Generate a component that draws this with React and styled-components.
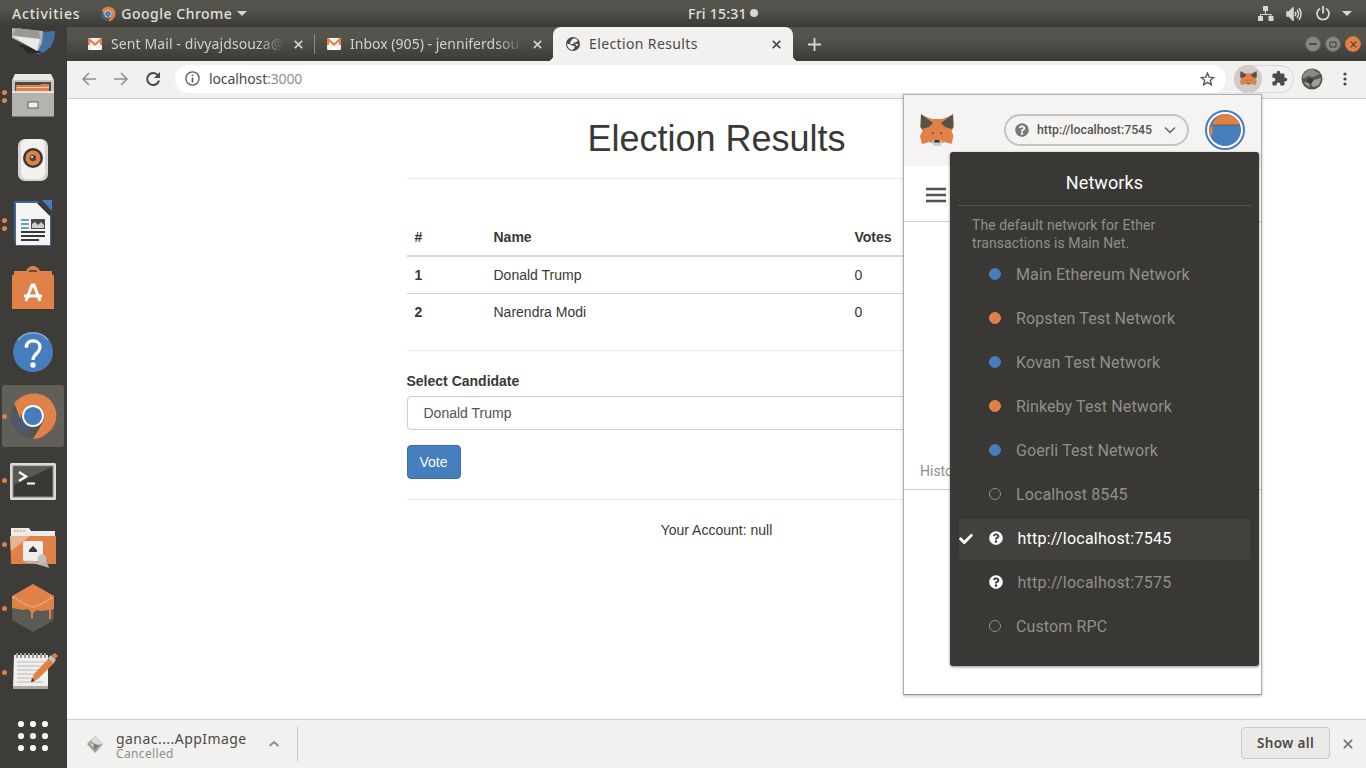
import React from "react";
import styled, { createGlobalStyle } from "styled-components";
import { FaCheck, FaQuestionCircle } from "react-icons/fa";
import { MdExtension } from "react-icons/md";

const ink = "#393834";
const olive = "#53524b";
const orange = "#e08248";
const blue = "#457dbd";
const paper = "#f2f1ef";
const silver = "#cfcdcb";
const grey = "#918f8c";

const GlobalStyle = createGlobalStyle`
  * { box-sizing: border-box; }
  body { margin: 0; overflow: hidden; background: #fff; }
  svg { display: block; flex: none; }
`;

const Desktop = styled.div`
  width: 1366px;
  height: 768px;
  display: flex;
  flex-direction: column;
  font-family: "Noto Sans", "Open Sans", sans-serif;
  color: ${ink};
`;

const TopBar = styled.header`
  height: 27px;
  flex: none;
  display: grid;
  grid-template-columns: 676px auto 1fr;
  align-items: center;
  padding: 0 14px 0 12px;
  background: linear-gradient(#54534c 0 30%, #3b3a36 100%);
  color: #e2e0dd;
`;

const TopGroup = styled.div`
  display: flex;
  align-items: center;
  gap: ${(p) => p.$gap || 0}px;
  justify-content: ${(p) => (p.$end ? "flex-end" : "flex-start")};
`;

const AppBadge = styled.span`
  margin: 0 5px 0 20px;
`;

const ShellLabel = styled.span`
  font-size: 14px;
  line-height: 20px;
  font-weight: 500;
  white-space: nowrap;
  letter-spacing: ${(p) => p.$spacing || 0}px;
`;

const Caret = styled.span`
  border: 5px solid transparent;
  border-top-color: #d8d6d3;
  border-bottom: 0;
  margin-left: ${(p) => p.$ml || 0}px;
`;

const NoticeDot = styled.span`
  width: 8px;
  height: 8px;
  border-radius: 50%;
  background: #d8d6d3;
  margin: -1px 0 0 3px;
`;

const Workspace = styled.div`
  flex: 1;
  min-height: 0;
  display: flex;
`;

const Dock = styled.nav`
  width: 67px;
  flex: none;
  display: flex;
  flex-direction: column;
  justify-content: flex-end;
  overflow: hidden;
  background: #3d3c38;
`;

const DockSlot = styled.div`
  height: 64px;
  flex: none;
  display: flex;
  align-items: center;
  padding: 1px 3px 1px 2px;
`;

const DockTile = styled.div`
  width: 62px;
  height: 62px;
  display: flex;
  align-items: center;
  border-radius: 3px;
  background: ${(p) => (p.$active ? "#605f58" : "transparent")};
`;

const RunDots = styled.div`
  width: 6px;
  flex: none;
  display: flex;
  flex-direction: column;
  gap: 3px;
`;

const RunDot = styled.i`
  width: 5px;
  height: 5px;
  border-radius: 50%;
  background: ${orange};
`;

const Browser = styled.section`
  position: relative;
  flex: 1;
  min-width: 0;
  display: flex;
  flex-direction: column;
  background: #fff;
`;

const TabStrip = styled.div`
  height: 34px;
  flex: none;
  display: flex;
  align-items: center;
  background: linear-gradient(#54534c 0 30%, #3b3a36 100%);
  color: #d3d1ce;
`;

const Tab = styled.div`
  position: relative;
  width: ${(p) => p.$width}px;
  height: 34px;
  flex: none;
  display: flex;
  align-items: center;
  padding: 0 ${(p) => p.$right}px 0 ${(p) => p.$left}px;
  gap: 9px;
  border-radius: 8px 8px 0 0;
  background: ${(p) => (p.$active ? paper : "transparent")};
  color: ${(p) => (p.$active ? "#4b4a46" : "inherit")};

  &::before, &::after {
    content: "";
    display: ${(p) => (p.$active ? "block" : "none")};
    position: absolute;
    bottom: 0;
    width: 6px;
    height: 6px;
  }
  &::before { left: -6px; background: radial-gradient(circle at 0 0, transparent 6px, ${paper} 6.5px); }
  &::after { right: -6px; background: radial-gradient(circle at 100% 0, transparent 6px, ${paper} 6.5px); }
`;

const TabTitle = styled.span`
  flex: 1;
  min-width: 0;
  white-space: nowrap;
  font-size: 14px;
  line-height: 20px;
  letter-spacing: ${(p) => p.$spacing || 0}px;
  mask-image: ${(p) => (p.$fade ? "linear-gradient(90deg, #000 84%, transparent 100%)" : "none")};
`;

const Divider = styled.span`
  width: 1px;
  height: ${(p) => p.$height}px;
  flex: none;
  background: ${(p) => p.$color};
`;

const NewTab = styled.div`
  flex: 1;
  padding-left: 15px;
`;

const WindowButtons = styled.div`
  display: flex;
  gap: 4px;
  padding-right: 5px;
`;

const WindowButton = styled.span`
  width: 16px;
  height: 16px;
  border-radius: 50%;
  display: flex;
  align-items: center;
  justify-content: center;
  border: 1px solid ${(p) => (p.$close ? "#cf7440" : "#64625d")};
  background: ${(p) => (p.$close ? orange : "#898782")};
`;

const Toolbar = styled.div`
  height: 38px;
  flex: none;
  display: flex;
  align-items: center;
  padding: 0 17px 2px 14px;
  border-bottom: 1px solid ${silver};
  background: ${paper};
`;

const NavButtons = styled.div`
  display: flex;
  gap: 16px;
  margin-right: 14px;
`;

const Omnibox = styled.div`
  width: 1051px;
  height: 28px;
  border-radius: 14px;
  display: flex;
  align-items: center;
  padding: 0 11px 0 10px;
  background: #fff;
`;

const Address = styled.span`
  flex: 1;
  margin-left: 9px;
  font-size: 14px;
  line-height: 20px;
  letter-spacing: -0.12px;
  color: #4a4945;
  span { color: ${grey}; }
`;

const Extensions = styled.div`
  width: 60px;
  height: 28px;
  margin-left: 8px;
  display: flex;
  align-items: center;
  gap: 9px;
  border: 1px solid #d9d7d5;
  border-left: 0;
  border-radius: 14px;
`;

const ActiveExtension = styled.span`
  width: 28px;
  height: 28px;
  border-radius: 50%;
  display: flex;
  align-items: center;
  justify-content: center;
  background: ${silver};
`;

const Profile = styled.span`
  margin: 0 20px 0 7px;
`;

const Page = styled.main`
  flex: 1;
  min-height: 0;
  padding: 20px 0 0 339.5px;
  font: 14px/20px "Liberation Sans", Arial, sans-serif;
`;

const Container = styled.div`
  width: 620px;
`;

const Title = styled.h1`
  height: 39px;
  margin: 0;
  font-size: 36px;
  font-weight: 400;
  line-height: 39.6px;
  text-align: center;
`;

const Rule = styled.hr`
  margin: 20px 0;
  border: 0;
  border-top: 1px solid #ebe9e7;
`;

const Table = styled.table`
  width: 100%;
  margin-top: 40px;
  border-collapse: collapse;
  table-layout: fixed;
`;

const HeadCell = styled.th`
  width: ${(p) => p.$width};
  padding: 8px;
  text-align: left;
  border-bottom: 2px solid #dbd9d7;
`;

const Cell = styled.td`
  padding: 8px;
  border-top: 1px solid #d4d2d0;
  font-weight: ${(p) => (p.$bold ? 700 : 400)};
`;

const FieldLabel = styled.label`
  display: block;
  margin-bottom: 5px;
  font-weight: 700;
`;

const Select = styled.div`
  height: 34px;
  padding: 6px 16px;
  border: 1px solid ${silver};
  border-radius: 4px;
  color: #53514e;
`;

const VoteButton = styled.button`
  display: block;
  height: 34px;
  margin-top: 15px;
  padding: 6px 12px;
  border: 1px solid #3f6ea3;
  border-radius: 4px;
  background: ${blue};
  color: #fff;
  font: 14px/20px "Liberation Sans", Arial, sans-serif;
`;

const Account = styled.p`
  margin: 0;
  text-align: center;
`;

const Downloads = styled.footer`
  height: 49px;
  flex: none;
  display: flex;
  align-items: center;
  padding: 0 13px 0 20px;
  border-top: 1px solid ${silver};
  background: ${paper};
`;

const DownloadItem = styled.div`
  width: 211px;
  height: 36px;
  display: flex;
  align-items: center;
  border-right: 1px solid ${silver};
`;

const DownloadText = styled.div`
  width: 131px;
  margin: 0 21px 0 13px;
  padding-top: 2px;
  color: #4b4a46;
  font-size: 14px;
  line-height: 16px;
  letter-spacing: 0.45px;
  small {
    display: block;
    font-size: 12px;
    line-height: 13px;
    letter-spacing: 0.35px;
    color: ${grey};
  }
`;

const ShowAll = styled.button`
  width: 89px;
  height: 32px;
  margin: 0 13px 2px auto;
  padding: 0;
  border: 1px solid #cbc9c7;
  border-radius: 4px;
  background: #eceae8;
  color: #4b4a46;
  font: 600 13.5px "Noto Sans", sans-serif;
  letter-spacing: 0.35px;
`;

const Wallet = styled.aside`
  position: absolute;
  left: 836px;
  top: 67px;
  width: 359px;
  height: 601px;
  display: flex;
  flex-direction: column;
  border: 1px solid #b1afad;
  border-bottom-color: #918f8c;
  background: #fff;
  box-shadow: 0 1px 3px rgba(0, 0, 0, 0.25);
  font-family: Roboto, sans-serif;
`;

const WalletHeader = styled.div`
  height: 71px;
  flex: none;
  display: flex;
  align-items: center;
  padding: 0 16px 2px;
  background: #f5f4f2;
`;

const NetworkPill = styled.div`
  width: 185px;
  height: 32px;
  margin: 0 16px 0 auto;
  display: flex;
  align-items: center;
  padding: 0 11px 0 9px;
  border: 2px solid #c6c4c2;
  border-radius: 16px;
  color: #53524e;
  font-size: 12.3px;
  font-weight: 500;
  span { flex: 1; margin-left: 8px; }
`;

const WalletBar = styled.div`
  height: 56px;
  flex: none;
  display: flex;
  align-items: center;
  padding: 2px 0 0 22px;
  border-bottom: 1px solid ${silver};
`;

const WalletBody = styled.div`
  height: 268px;
  display: flex;
  align-items: flex-end;
  padding: 0 16px 9px;
  border-bottom: 1px solid ${silver};
  color: ${grey};
  font-size: 14px;
  line-height: 18px;
`;

const NetworkMenu = styled.div`
  position: absolute;
  left: 883px;
  top: 125px;
  width: 309px;
  height: 514px;
  padding: 0 8px;
  border-radius: 3px;
  background: ${ink};
  box-shadow: 0 1px 3px rgba(0, 0, 0, 0.45);
  color: ${grey};
  font-family: Roboto, sans-serif;
`;

const MenuTitle = styled.div`
  height: 54px;
  padding-top: 7px;
  border-bottom: 1px solid ${olive};
  color: #fff;
  font-size: 18px;
  line-height: 47px;
  letter-spacing: 0.1px;
  text-align: center;
`;

const MenuNote = styled.p`
  width: 210px;
  margin: 10px 0 3px 14px;
  font-size: 14px;
  line-height: 18px;
  letter-spacing: 0.08px;
`;

const NetworkRow = styled.div`
  height: 41px;
  margin: 0 1px 3px;
  padding-bottom: 2px;
  display: flex;
  align-items: center;
  border-radius: 3px;
  font-size: 16px;
  letter-spacing: ${(p) => (p.$plain ? 0.11 : 0.24)}px;
  color: ${(p) => (p.$selected ? "#fff" : grey)};
  background: ${(p) => (p.$selected ? "#42413d" : "transparent")};
`;

const CheckSlot = styled.span`
  width: 30px;
  flex: none;
  color: #fff;
`;

const Marker = styled.span`
  width: 12px;
  height: 12px;
  margin: -1px 15px 0 0;
  flex: none;
  border-radius: 50%;
  border: 1px solid ${(p) => p.$color || grey};
  background: ${(p) => p.$color || "transparent"};
`;

const QuestionSlot = styled.span`
  width: 14px;
  margin: -1px 14.5px 0 0;
  color: #fff;
`;

const Close = ({ size = 9, color = "#d3d1ce", w = 1.7 }) => (
  <svg width={size} height={size} viewBox="0 0 9 9" stroke={color} strokeWidth={w}>
    <path d="M.8.8l7.4 7.4M8.2.8L.8 8.2" />
  </svg>
);

const ChromeMark = ({ size = 48, shade = "#49627c" }) => (
  <svg width={size} height={size} viewBox="0 0 48 48">
    <circle cx="24" cy="24" r="21" fill="#53534e" />
    <path d="M4 18a20 20 0 0 0 14 25l5-9-10-10z" fill={shade} />
    <path d="M6 12C14 1 31-1 41 9c10 12 5 27-5 33-4 3-8 4-12 4l10-17c2-6 0-9-2-12H20c-5 2-8 6-8 10z" fill={orange} />
    <circle cx="24" cy="24" r="10.5" fill="#fff" />
    <circle cx="24" cy="24" r="8.7" fill={blue} />
  </svg>
);

const MailMark = () => (
  <svg width="14" height="12" viewBox="0 0 14 12">
    <rect width="14" height="12" rx="1" fill="#f4f2f0" />
    <path d="M1 7V1.200L7 6.600l6-5.400V7" fill="none" stroke={orange} strokeWidth="2" />
    <path d="M3 12l4-4 4 4z" fill="#fff" />
  </svg>
);

const FoxMark = ({ size, height = size }) => (
  <svg width={size} height={height} viewBox="0 0 34 32" preserveAspectRatio="none">
    <path d="M1 1l11 4h10l11-4 .5 12-2 4 2 5-2 8-7-2-4 1.500h-7L9 28l-7 2-2-8 2.500-5L.5 13z" fill={orange} />
    <path d="M1 0l12 9-4 4-7 2-1.500-2zM33 0L21 9l4 4 7 2 1.500-2z" fill="#53524b" />
    <path d="M13 26h8l1 3-2 3h-6l-2-3z" fill="#cfcdcb" />
    <path d="M14.500 26h5l.5 2.500h-6z" fill={ink} />
    <path d="M12 18.500h1.500V20H12zM20.500 18.500H22V20h-1.500z" fill={ink} />
  </svg>
);

const ThunderMark = () => (
  <svg width="50" height="48" viewBox="0 0 50 48">
    <path d="M32 24l15-1c0 8-2 15-8 19-5 4-8 5-10 4z" fill="#4470a3" />
    <path d="M10 36l20 6 4 3H20z" fill="#2a2925" />
    <path d="M4 20l31 3-1 12-4 8L4 30z" fill="#b5b3b0" />
    <path d="M9 20l22 3 1 8L4 27z" fill="#9b9996" />
    <path d="M4 28l28 3-3 12z" fill="#eceae8" />
  </svg>
);

const FilesMark = () => (
  <svg width="50" height="48" viewBox="0 0 50 48">
    <path d="M7 2h36l3 6v36H4V8z" fill="#c8c6c3" />
    <path d="M7 2h36l2 6H5z" fill="#eae8e5" />
    <path d="M7 10h36v11H7z" fill="#4a4945" />
    <path d="M8 13h24l2-1h7v8H8z" fill={orange} />
    <path d="M9 15.500h32" stroke="#f4d5bf" />
    <path d="M4 20h42v24.500H4z" fill="#b5b3b0" />
    <path d="M4 20h42" stroke="#e5e3e0" strokeWidth="2" />
    <rect x="20" y="30" width="10" height="6" fill="#f1efed" stroke="#65635e" />
  </svg>
);

const MusicMark = () => (
  <svg width="50" height="48" viewBox="0 0 50 48">
    <rect x="10" y="3" width="30" height="42" rx="7" fill="#d6d4d1" />
    <rect x="13" y="3" width="24" height="40" rx="6" fill="#f3f1ef" />
    <circle cx="25" cy="22" r="10" fill={ink} />
    <circle cx="25" cy="22" r="7.500" fill={orange} />
    <circle cx="25" cy="22" r="3.200" fill="#4a4945" />
    <circle cx="24" cy="21" r="1" fill="#fff" />
  </svg>
);

const WriterMark = () => (
  <svg width="50" height="48" viewBox="0 0 50 48">
    <path d="M6 1h24l13 14v31H8L6 40z" fill="#42689a" />
    <path d="M8 3h21l13 13v29H8z" fill="#f6f5f3" />
    <path d="M34 0h10v11z" fill={blue} />
    <path d="M29 3l13 13V12L33 3z" fill={ink} />
    <path d="M13 20h8M13 24h8M13 28h8" stroke={blue} strokeWidth="1.600" />
    <rect x="23" y="19" width="14" height="10" fill="#4b4a46" />
    <path d="M24 28v-4l3-2 3 3 3-3 3 3v3z" fill="#cfcdcb" />
    <path d="M13 32h24M13 36h24M13 40h18" stroke={ink} strokeWidth="1.800" />
  </svg>
);

const SoftwareMark = () => (
  <svg width="50" height="48" viewBox="0 0 50 48">
    <path d="M18 8l1-3 4-3h4l4 3 1 3z" fill={orange} />
    <path d="M6 7h38v3l2 2v33H4V12l2-2z" fill={orange} />
    <path d="M21 7h8" stroke={ink} strokeWidth="1.500" />
    <path d="M18 37l6-16h2l6 16" fill="none" stroke="#fff" strokeWidth="3" />
    <path d="M16 32h18" stroke="#fff" strokeWidth="3" />
  </svg>
);

const HelpMark = () => (
  <svg width="50" height="48" viewBox="0 0 50 48">
    <circle cx="25" cy="24" r="20" fill={blue} />
    <path d="M10 12a19 19 0 0 1 30 0" stroke="#86a9d2" strokeWidth="1.500" fill="none" />
    <path d="M18.500 18c0-7 13.500-7 13.500 1 0 6-7 7-7 13" fill="none" stroke="#fff" strokeWidth="3.200" />
    <circle cx="18.500" cy="18" r="2" fill="#fff" />
    <circle cx="25" cy="37" r="2.700" fill="#fff" />
  </svg>
);

const TerminalMark = () => (
  <svg width="50" height="48" viewBox="0 0 50 48">
    <rect x="2" y="7" width="46" height="37" rx="1.500" fill="#dddbd8" />
    <rect x="5" y="10" width="40" height="31" fill="#393834" stroke="#8b8985" />
    <path d="M6 11h38L6 29z" fill="#595851" />
    <path d="M11 16l7 4.500-7 4.500" fill="none" stroke="#fff" strokeWidth="2.300" />
    <path d="M19 27.500h8" stroke="#fff" strokeWidth="2" />
  </svg>
);

const FolderMark = () => (
  <svg width="50" height="48" viewBox="0 0 50 48">
    <path d="M3 8h18l2 3h24v7H3z" fill="#eeecea" />
    <path d="M6 11h12" stroke={orange} strokeDasharray="2 1" />
    <path d="M2 16h46v28H3z" fill={orange} />
    <path d="M2 16h20L3 31z" fill="#e9b591" />
    <rect x="15" y="21" width="20" height="20" rx="1.500" fill="#f1efed" />
    <path d="M21 30l4-4 4 4v2h-8z" fill={ink} />
    <path d="M18 42c8-1 13 2 21 4l-3-6" fill="none" stroke="#b7b5b2" strokeWidth="2.500" />
    <circle cx="34" cy="39" r="4.500" fill="#c3c1be" />
  </svg>
);

const GanacheMark = () => (
  <svg width="50" height="50" viewBox="0 0 50 50">
    <path d="M4 13l21 11 21-11v24L25 49 4 37z" fill="#5b5a53" />
    <path d="M25 1l21 12v13l-3 1v9h-2v-9l-8 1-4-1-4 3v5h-2v-6l-3-3-5 1-5-1-6-1V13z" fill={orange} />
    <path d="M5 14c7 4 12 8 20 10 8-2 13-6 20-10" fill="none" stroke="#eeb48b" strokeWidth="1.500" strokeDasharray="2 1" />
  </svg>
);

const NotesMark = () => (
  <svg width="50" height="48" viewBox="0 0 50 48">
    <path d="M6 7h34v34H5z" fill="#f1efed" />
    <path d="M5 38h35v3H5z" fill="#aaa8a5" />
    <path d="M9 14h28M9 18h28M9 22h24M9 26h22M9 30h20M9 34h26" stroke="#bcbab7" />
    <path d="M9 5v5M13 5v5M17 5v5M21 5v5M25 5v5M29 5v5M33 5v5M37 5v5" stroke="#9a9894" strokeWidth="2" />
    <path d="M23 34l3-8 16-17 5 5-17 17z" fill={orange} />
    <path d="M40 10l3-3 5 5-3 3z" fill="#c5c3c0" />
    <path d="M44 7l3-2 3 3-3 3z" fill={orange} />
    <path d="M23 34l1-4 3 3z" fill={ink} />
  </svg>
);

const AppsMark = () => (
  <svg width="50" height="48" viewBox="0 0 50 48" fill="#f6f5f3">
    {[12, 24, 36].flatMap((y) =>
      [13, 25, 37].map((x) => <circle key={`${x}-${y}`} cx={x} cy={y} r="3.100" />)
    )}
  </svg>
);

const Globe = () => (
  <svg width="14" height="14" viewBox="0 0 14 14">
    <circle cx="7" cy="7" r="7" fill="#4b4a46" />
    <path d="M6.500 1.800l3.500-.3 1.800 2L10 5.200 8 5.500 7 7H4.800L4 5.500z" fill={paper} />
    <path d="M1 6.800l3.300.4 2 1.500 2.500.3-.5 2.500-2.300 1.600C3.500 12.700 1.200 10 1 6.800z" fill={paper} />
    <path d="M9 6.800l3 .2.200 1-1.800 1z" fill={paper} />
  </svg>
);

const Chevron = ({ up }) => (
  <svg width="12" height="8" viewBox="0 0 12 8" fill="none" stroke={up ? grey : "#5b5a56"} strokeWidth={up ? 2 : 1.3}>
    <path d={up ? "M1.500 6l4.500-4 4.500 4" : "M1 1.500l5 5 5-5"} />
  </svg>
);

const ActiveChrome = () => <ChromeMark size={50} shade="#50596a" />;

const dockItems = [
  { Icon: ThunderMark, dots: 0 },
  { Icon: FilesMark, dots: 2 },
  { Icon: MusicMark, dots: 0 },
  { Icon: WriterMark, dots: 2 },
  { Icon: SoftwareMark, dots: 0 },
  { Icon: HelpMark, dots: 0 },
  { Icon: ActiveChrome, dots: 1, active: true },
  { Icon: TerminalMark, dots: 1 },
  { Icon: FolderMark, dots: 1 },
  { Icon: GanacheMark, dots: 1 },
  { Icon: NotesMark, dots: 1 },
  { Icon: AppsMark, dots: 0 },
];

const networks = [
  { name: "Main Ethereum Network", color: blue },
  { name: "Ropsten Test Network", color: orange },
  { name: "Kovan Test Network", color: blue },
  { name: "Rinkeby Test Network", color: orange },
  { name: "Goerli Test Network", color: blue },
  { name: "Localhost 8545" },
  { name: "http://localhost:7545", custom: true, selected: true },
  { name: "http://localhost:7575", custom: true },
  { name: "Custom RPC" },
];

const candidates = [
  { id: 1, name: "Donald Trump", votes: 0 },
  { id: 2, name: "Narendra Modi", votes: 0 },
];

function SystemBar() {
  return (
    <TopBar>
      <TopGroup>
        <ShellLabel $spacing={0.8}>Activities</ShellLabel>
        <AppBadge><ChromeMark size={16} /></AppBadge>
        <ShellLabel $spacing={0.5}>Google Chrome</ShellLabel>
        <Caret $ml={5} />
      </TopGroup>
      <TopGroup>
        <ShellLabel $spacing={0.25}>Fri 15:31</ShellLabel>
        <NoticeDot />
      </TopGroup>
      <TopGroup $end $gap={12}>
        <svg width="16" height="15" viewBox="0 0 16 15" fill="#d8d6d3">
          <path d="M5 0h5v5H5zM0 10h5v5H0zM10.500 10h5v5h-5zM7 5h1v3h5.500v2h-1V9H3v1H2V8h5z" />
        </svg>
        <svg width="17" height="14" viewBox="0 0 17 14" fill="none" stroke="#d8d6d3" strokeWidth="1.500">
          <path d="M1 5h2l4-4v12L3 9H1z" fill="#d8d6d3" />
          <path d="M9 5q1.500 2 0 4M11 3q3 4 0 8M13 1q4 6 0 12" />
        </svg>
        <svg width="16" height="16" viewBox="0 0 16 16" fill="none" stroke="#d8d6d3" strokeWidth="1.800">
          <path d="M5 2.500a6 6 0 1 0 6 0M8 0v7.500" />
        </svg>
        <Caret $ml={-1} />
      </TopGroup>
    </TopBar>
  );
}

function BrowserChrome() {
  return (
    <>
      <TabStrip>
        <Tab $width={247} $left={21} $right={11}>
          <MailMark />
          <TabTitle $fade $spacing={0.1}>Sent Mail - divyajdsouza@</TabTitle>
          <Close />
        </Tab>
        <Divider $height={20} $color="#8a8883" />
        <Tab $width={238} $left={12} $right={11}>
          <MailMark />
          <TabTitle $fade $spacing={0.02}>Inbox (905) - jenniferdsou</TabTitle>
          <Close />
        </Tab>
        <Tab $width={240} $left={13} $right={12} $active>
          <Globe />
          <TabTitle $spacing={0.38}>Election Results</TabTitle>
          <Close color="#4b4a46" />
        </Tab>
        <NewTab>
          <svg width="13" height="13" viewBox="0 0 13 13" stroke="#dad8d5" strokeWidth="1.800">
            <path d="M6.500 0v13M0 6.500h13" />
          </svg>
        </NewTab>
        <WindowButtons>
          <WindowButton>
            <svg width="8" height="2"><path d="M0 1h8" stroke={ink} strokeWidth="1.500" /></svg>
          </WindowButton>
          <WindowButton>
            <svg width="8" height="7"><path d="M1 1h6v5H1z" fill="none" stroke={ink} /></svg>
          </WindowButton>
          <WindowButton $close><Close size={7} color={ink} w={1.3} /></WindowButton>
        </WindowButtons>
      </TabStrip>
      <Toolbar>
        <NavButtons>
          <svg width="16" height="16" viewBox="0 0 16 16" fill="none" stroke={grey} strokeWidth="1.500">
            <path d="M15 8H2M8 2L2 8l6 6" />
          </svg>
          <svg width="16" height="16" viewBox="0 0 16 16" fill="none" stroke={grey} strokeWidth="1.500">
            <path d="M1 8h13M8 2l6 6-6 6" />
          </svg>
          <svg width="16" height="16" viewBox="0 0 16 16" fill="none" stroke="#4b4a46" strokeWidth="2">
            <path d="M13 4.500A6 6 0 1 0 14 9.500" />
            <path d="M15 1v6H9z" fill="#4b4a46" stroke="none" />
          </svg>
        </NavButtons>
        <Omnibox>
          <svg width="15" height="15" viewBox="0 0 15 15" fill="none" stroke="#5b5a56" strokeWidth="1.300">
            <circle cx="7.500" cy="7.500" r="6.600" />
            <path d="M7.500 6.500v5M7.500 3.500v1.600" strokeWidth="1.600" />
          </svg>
          <Address>localhost<span>:3000</span></Address>
          <svg width="15" height="14" viewBox="0 0 15 14" fill="none" stroke="#5b5a56" strokeWidth="1.400">
            <path d="M7.500 1l1.700 4.200 4.500.3-3.400 2.900 1.100 4.400-3.900-2.400-3.900 2.400 1.100-4.400L1.300 5.500l4.500-.3z" />
          </svg>
        </Omnibox>
        <Extensions>
          <ActiveExtension><FoxMark size={17} height={15} /></ActiveExtension>
          <MdExtension size={17} color="#4b4a46" />
        </Extensions>
        <Profile>
          <svg width="22" height="22" viewBox="0 0 22 22">
            <circle cx="11" cy="11" r="10.500" fill="#55544e" />
            <path d="M2 7q4-6 9-6l8 5-7 3-5-1-5 3z" fill="#8b8985" />
            <path d="M13 12l7-2q0 5-4 8l-4 1-2-3zM3 14l5 1 1 4-4-2z" fill="#a09e9a" />
            <path d="M7 10l5 1-2 5-4-2z" fill={ink} />
          </svg>
        </Profile>
        <svg width="4" height="14" viewBox="0 0 4 14" fill="#4b4a46">
          <circle cx="2" cy="2" r="1.600" /><circle cx="2" cy="7" r="1.600" /><circle cx="2" cy="12" r="1.600" />
        </svg>
      </Toolbar>
    </>
  );
}

function ElectionPage() {
  return (
    <Page>
      <Container>
        <Title>Election Results</Title>
        <Rule />
        <Table>
          <thead>
            <tr>
              <HeadCell $width="79px">#</HeadCell>
              <HeadCell $width="361px">Name</HeadCell>
              <HeadCell>Votes</HeadCell>
            </tr>
          </thead>
          <tbody>
            {candidates.map((c) => (
              <tr key={c.id}>
                <Cell $bold>{c.id}</Cell>
                <Cell>{c.name}</Cell>
                <Cell>{c.votes}</Cell>
              </tr>
            ))}
          </tbody>
        </Table>
        <Rule />
        <FieldLabel>Select Candidate</FieldLabel>
        <Select>Donald Trump</Select>
        <VoteButton>Vote</VoteButton>
        <Rule />
        <Account>Your Account: null</Account>
      </Container>
    </Page>
  );
}

function DownloadBar() {
  return (
    <Downloads>
      <DownloadItem>
        <svg width="16" height="17" viewBox="0 0 16 17">
          <path d="M8 0l8 8-8 9-8-9z" fill="#a19f9c" />
          <path d="M8 0l8 8-6 1-6-4z" fill="#dcdad7" />
          <path d="M4 8l4 6 4-5z" fill="#7d7b77" />
          <path d="M3 7l3 1 1 4z" fill="#eceae8" />
        </svg>
        <DownloadText>ganac....AppImage<small>Cancelled</small></DownloadText>
        <Chevron up />
      </DownloadItem>
      <ShowAll>Show all</ShowAll>
      <Close size={10} color="#7b7976" w={1.6} />
    </Downloads>
  );
}

function WalletPopup() {
  return (
    <>
      <Wallet>
        <WalletHeader>
          <FoxMark size={34} height={32} />
          <NetworkPill>
            <FaQuestionCircle size={14} color="#7b7976" />
            <span>http://localhost:7545</span>
            <Chevron />
          </NetworkPill>
          <svg width="40" height="40" viewBox="0 0 40 40">
            <circle cx="20" cy="20" r="19" fill="#fff" stroke={blue} strokeWidth="2" />
            <circle cx="20" cy="20" r="16" fill={blue} />
            <path d="M7 15C12 1 29 0 35 15z" fill={orange} />
            <path d="M5 27q-2-7 2-12l1 8z" fill={orange} />
            <path d="M7 15h28" stroke="#6b5a4e" />
          </svg>
        </WalletHeader>
        <WalletBar>
          <svg width="20" height="16" viewBox="0 0 20 16" stroke={olive} strokeWidth="2.500">
            <path d="M0 2h20M0 8h20M0 14h20" />
          </svg>
        </WalletBar>
        <WalletBody>History</WalletBody>
      </Wallet>
      <NetworkMenu>
        <MenuTitle>Networks</MenuTitle>
        <MenuNote>The default network for Ether transactions is Main Net.</MenuNote>
        {networks.map((n) => (
          <NetworkRow key={n.name} $selected={n.selected} $plain={!n.custom}>
            <CheckSlot>{n.selected && <FaCheck size={14} />}</CheckSlot>
            {n.custom ? (
              <QuestionSlot><FaQuestionCircle size={14} /></QuestionSlot>
            ) : (
              <Marker $color={n.color} />
            )}
            {n.name}
          </NetworkRow>
        ))}
      </NetworkMenu>
    </>
  );
}

export default function App() {
  return (
    <Desktop>
      <GlobalStyle />
      <SystemBar />
      <Workspace>
        <Dock>
          {dockItems.map(({ Icon, dots, active }, i) => (
            <DockSlot key={i}>
              <DockTile $active={active}>
                <RunDots>
                  {Array.from({ length: dots }, (_, d) => <RunDot key={d} />)}
                </RunDots>
                <Icon />
              </DockTile>
            </DockSlot>
          ))}
        </Dock>
        <Browser>
          <BrowserChrome />
          <ElectionPage />
          <DownloadBar />
          <WalletPopup />
        </Browser>
      </Workspace>
    </Desktop>
  );
}
